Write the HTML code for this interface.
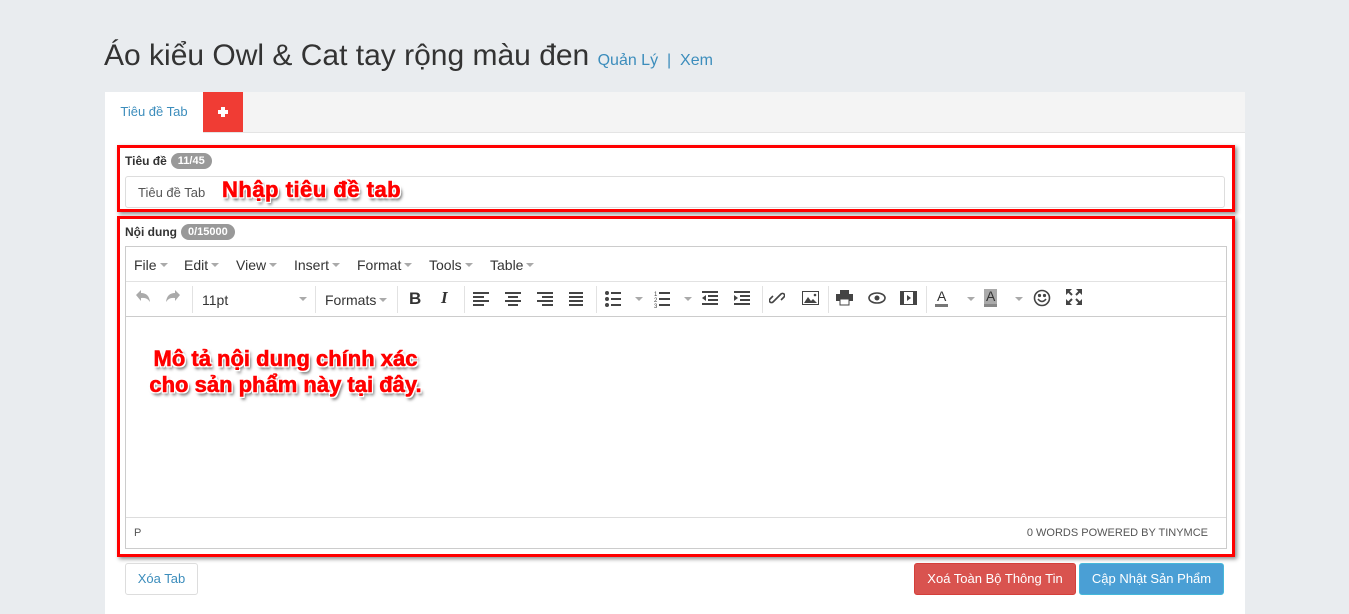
<!DOCTYPE html>
<html><head><meta charset="utf-8"><style>
*{box-sizing:border-box;margin:0;padding:0}
body{width:1349px;height:614px;background:#e9ecef;font-family:"Liberation Sans",sans-serif;position:relative;overflow:hidden;color:#333}
.a{position:absolute}
h1{position:absolute;left:104px;top:39px;font-size:30px;font-weight:normal;color:#333;white-space:nowrap}
h1 small{font-size:16px;color:#3c8dbc}
.panel{left:105px;top:92px;width:1140px;height:522px;background:#fff}
.tabbar{left:105px;top:92px;width:1140px;height:41px;background:#f4f4f4;border-bottom:1px solid #e4e4e4}
.tab{left:105px;top:92px;width:98px;height:41px;background:#fff;color:#3c8dbc;font-size:13px;text-align:center;line-height:40px}
.plus{left:203px;top:92px;width:40px;height:40px;background:#f03c34}
.rb{border:3px solid #f00;box-shadow:2px 2px 4px rgba(0,0,0,.45)}
.lbl{font-size:12px;font-weight:bold;color:#333}
.badge{display:inline-block;background:#999;color:#fff;border-radius:9px;font-size:11px;font-weight:bold;padding:2px 7px;margin-left:4px;vertical-align:1px}
.inp{left:125px;top:176px;width:1100px;height:32px;border:1px solid #ddd;border-radius:3px;font-size:13px;color:#555;padding:8px 12px}
.red{color:#f00;font-weight:bold;white-space:nowrap;-webkit-text-stroke:0.6px #f00;text-shadow:0 0 2px #fff,1.5px 1.5px 0 #fff,-1.5px -1.5px 0 #fff,1.5px -1.5px 0 #fff,-1.5px 1.5px 0 #fff,2px 3px 3px #444}
.ed{left:125px;top:246px;width:1102px;height:303px;border:1px solid #ccc}
.menu{left:126px;top:247px;width:1100px;height:35px;border-bottom:1px solid #e2e2e2;font-size:14px;color:#333}
.menu span{position:absolute;top:10px}
.car{display:inline-block;border-left:4px solid transparent;border-right:4px solid transparent;border-top:4px solid #aaa;vertical-align:3px;margin-left:3px}
.tb{left:126px;top:282px;width:1100px;height:35px;border-bottom:1px solid #ccc}
.sep{position:absolute;top:4px;width:1px;height:27px;background:#e2e2e2}
.ic{position:absolute;top:8px}
.st{left:126px;top:517px;width:1100px;height:31px;border-top:1px solid #ddd;font-size:11px;color:#555}
.btn{height:32px;border-radius:3px;font-size:14px;text-align:center;line-height:30px}
</style></head><body>
<h1>Áo kiểu Owl &amp; Cat tay rộng màu đen <small>Quản Lý &nbsp;|&nbsp; Xem</small></h1>
<div class="a panel"></div>
<div class="a tabbar"></div>
<div class="a tab">Tiêu đề Tab</div>
<div class="a plus"><svg width="40" height="40"><rect x="15" y="18" width="10" height="4" fill="#fff"/><rect x="18" y="15" width="4" height="10" fill="#fff"/></svg></div>

<div class="a rb" style="left:117px;top:145px;width:1118px;height:67px"></div>
<div class="a lbl" style="left:125px;top:153px">Tiêu đề<span class="badge">11/45</span></div>
<div class="a inp">Tiêu đề Tab</div>
<div class="a red" style="left:222px;top:177px;font-size:22px;letter-spacing:0.5px">Nhập tiêu đề tab</div>

<div class="a rb" style="left:117px;top:216px;width:1118px;height:341px"></div>
<div class="a lbl" style="left:125px;top:224px">Nội dung<span class="badge">0/15000</span></div>
<div class="a ed"></div>
<div class="a menu">
<span style="left:8px">File<i class="car"></i></span>
<span style="left:58px">Edit<i class="car"></i></span>
<span style="left:110px">View<i class="car"></i></span>
<span style="left:168px">Insert<i class="car"></i></span>
<span style="left:231px">Format<i class="car"></i></span>
<span style="left:303px">Tools<i class="car"></i></span>
<span style="left:364px">Table<i class="car"></i></span>
</div>
<div class="a tb">
<svg class="ic" style="left:10px;top:8px" width="14" height="14" fill="#aaa"><path d="M0 5L5 0v3q8 0 9 9q-3-5-9-4v3z"/></svg>
<svg class="ic" style="left:40px;top:8px" width="14" height="14" fill="#aaa"><path d="M14 5L9 0v3q-8 0-9 9q3-5 9-4v3z"/></svg>
<div class="sep" style="left:66px"></div>
<span class="ic" style="left:76px;font-size:14px;top:10px">11pt</span><i class="car a" style="left:170px;top:15px"></i>
<div class="sep" style="left:189px"></div>
<span class="ic" style="left:199px;font-size:14px;top:10px">Formats<i class="car"></i></span>
<div class="sep" style="left:271px"></div>
<b class="ic" style="left:283px;font-size:17px;top:7px">B</b>
<i class="ic" style="left:315px;font-size:17px;font-weight:bold;font-family:'Liberation Serif';top:6px">I</i>
<div class="sep" style="left:338px"></div>
<svg class="ic" style="left:347px;top:9px" width="110" height="16" fill="#444"><g><rect x="0" y="1" width="16" height="2"/><rect x="0" y="5" width="11" height="2"/><rect x="0" y="9" width="16" height="2"/><rect x="0" y="13" width="11" height="2"/></g><g transform="translate(32)"><rect x="0" y="1" width="16" height="2"/><rect x="3" y="5" width="10" height="2"/><rect x="0" y="9" width="16" height="2"/><rect x="3" y="13" width="10" height="2"/></g><g transform="translate(64)"><rect x="0" y="1" width="16" height="2"/><rect x="5" y="5" width="11" height="2"/><rect x="0" y="9" width="16" height="2"/><rect x="5" y="13" width="11" height="2"/></g><g transform="translate(96)"><rect x="0" y="1" width="16" height="2"/><rect x="0" y="5" width="16" height="2"/><rect x="0" y="9" width="16" height="2"/><rect x="0" y="13" width="16" height="2"/></g></svg>
<div class="sep" style="left:470px"></div>
<svg class="ic" style="left:479px;top:8px" width="150" height="18" fill="#444"><circle cx="2" cy="3" r="2"/><circle cx="2" cy="9" r="2"/><circle cx="2" cy="15" r="2"/><rect x="6" y="2" width="10" height="2"/><rect x="6" y="8" width="10" height="2"/><rect x="6" y="14" width="10" height="2"/><g transform="translate(49)"><text x="0" y="6" font-size="6">1</text><text x="0" y="12" font-size="6">2</text><text x="0" y="18" font-size="6">3</text><rect x="5" y="2" width="11" height="2"/><rect x="5" y="8" width="11" height="2"/><rect x="5" y="14" width="11" height="2"/></g><g transform="translate(97)"><rect x="0" y="1" width="16" height="2"/><rect x="6" y="5" width="10" height="2"/><rect x="6" y="9" width="10" height="2"/><rect x="0" y="13" width="16" height="2"/><path d="M4 5L0 8L4 11z"/></g><g transform="translate(129)"><rect x="0" y="1" width="16" height="2"/><rect x="6" y="5" width="10" height="2"/><rect x="6" y="9" width="10" height="2"/><rect x="0" y="13" width="16" height="2"/><path d="M0 5L4 8L0 11z"/></g></svg>
<i class="car a" style="left:506px;top:15px"></i><i class="car a" style="left:555px;top:15px"></i>
<div class="sep" style="left:636px"></div>
<svg class="ic" style="left:643px;top:8px" width="16" height="16" fill="none" stroke="#444" stroke-width="1.6"><path d="M7 9l-3 3a2 2 0 01-3-3l3-3M9 7l3-3a2 2 0 013 3l-3 3M6 10l4-4"/></svg>
<svg class="ic" style="left:676px;top:9px" width="17" height="14"><rect x="0.5" y="0.5" width="16" height="13" fill="#fff" stroke="#444"/><path d="M2 12l4-6 3 4 2-2 4 4z" fill="#444"/><circle cx="13" cy="4" r="1.3" fill="#444"/></svg>
<div class="sep" style="left:702px"></div>
<svg class="ic" style="left:710px;top:8px" width="17" height="16" fill="#444"><rect x="4" y="0" width="9" height="4"/><rect x="0" y="4" width="17" height="7"/><rect x="4" y="9" width="9" height="6" fill="#fff" stroke="#444"/></svg>
<svg class="ic" style="left:742px;top:10px" width="18" height="12"><ellipse cx="9" cy="6" rx="8" ry="5" fill="none" stroke="#444" stroke-width="1.6"/><circle cx="9" cy="6" r="2.5" fill="#444"/></svg>
<svg class="ic" style="left:774px;top:9px" width="17" height="14"><rect x="0.5" y="0.5" width="16" height="13" fill="none" stroke="#444"/><rect x="0" y="0" width="4" height="14" fill="#444"/><rect x="13" y="0" width="4" height="14" fill="#444"/><path d="M7 4l4 3-4 3z" fill="#444"/></svg>
<div class="sep" style="left:800px"></div>
<span class="ic" style="left:809px;font-size:14px;top:7px;border-bottom:3px solid #777;line-height:15px;padding:0 2px">A</span><i class="car a" style="left:838px;top:15px"></i>
<span class="ic" style="left:858px;font-size:14px;top:7px;background:#aaa;line-height:15px;padding:0 2px;border-bottom:3px solid #888">A</span><i class="car a" style="left:886px;top:15px"></i>
<svg class="ic" style="left:907px;top:7px" width="18" height="18" fill="none" stroke="#444" stroke-width="1.6"><circle cx="9" cy="9" r="7.5"/><path d="M5 10q4 5 8 0"/><circle cx="6.5" cy="6.5" r=".8" fill="#444"/><circle cx="11.5" cy="6.5" r=".8" fill="#444"/></svg>
<svg class="ic" style="left:940px;top:7px" width="16" height="16" fill="#444"><path d="M0 0h6L0 6zM16 0v6L10 0zM0 16v-6l6 6zM16 16h-6l6-6z"/><path d="M2 2l4 4M14 2l-4 4M2 14l4-4M14 14l-4-4" stroke="#444" stroke-width="2"/></svg>
</div>
<div class="a red" style="left:143px;top:346px;width:285px;font-size:22px;line-height:26px;text-align:center">Mô tả nội dung chính xác<br>cho sản phẩm này tại đây.</div>
<div class="a st"><span class="a" style="left:8px;top:9px">P</span><span class="a" style="right:18px;top:9px">0 WORDS POWERED BY TINYMCE</span></div>

<div class="a btn" style="left:125px;top:563px;width:73px;border:1px solid #ddd;color:#3c8dbc;font-size:13px">Xóa Tab</div>
<div class="a btn" style="left:914px;top:563px;width:162px;background:#d9534f;border:1px solid #d43f3a;color:#fff;font-size:13px">Xoá Toàn Bộ Thông Tin</div>
<div class="a btn" style="left:1079px;top:563px;width:145px;background:#4a9fd5;border:1px solid #46b8da;color:#fff;font-size:13px">Cập Nhật Sản Phẩm</div>
</body></html>
